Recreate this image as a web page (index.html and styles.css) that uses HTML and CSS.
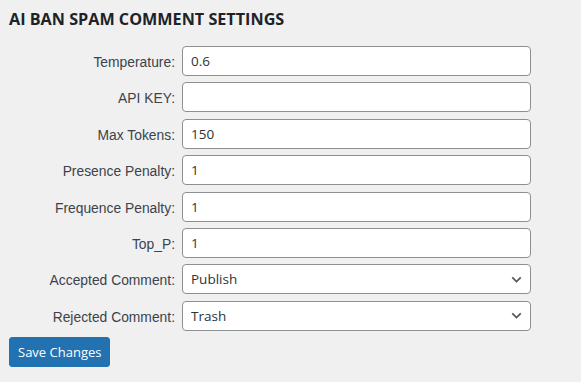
FILE: index.html
```html
<!DOCTYPE html>
<html>
<head>
    <title>AI Ban Spam Comment Settings</title>
    <link rel="stylesheet" href="styles.css">
</head>
<body>
    <div class="wrap">
        <h2>AI BAN SPAM COMMENT SETTINGS</h2>
        <form class="settings">
            <label for="temperature">Temperature:</label>
            <input type="text" id="temperature" value="0.6">
            <label for="api_key">API KEY:</label>
            <input type="text" id="api_key" value="">
            <label for="max_tokens">Max Tokens:</label>
            <input type="text" id="max_tokens" value="150">
            <label for="presence_penalty">Presence Penalty:</label>
            <input type="text" id="presence_penalty" value="1">
            <label for="frequence_penalty">Frequence Penalty:</label>
            <input type="text" id="frequence_penalty" value="1">
            <label for="top_p">Top_P:</label>
            <input type="text" id="top_p" value="1">
            <label for="accepted">Accepted Comment:</label>
            <select id="accepted">
                <option>Publish</option>
                <option>Pending</option>
            </select>
            <label for="rejected">Rejected Comment:</label>
            <select id="rejected">
                <option>Trash</option>
                <option>Spam</option>
            </select>
        </form>
        <button type="submit" class="button-primary">Save Changes</button>
    </div>
</body>
</html>
```

FILE: styles.css
```css
body { margin: 0; background: #f0f0f1; font-family: "Liberation Sans", Arial, sans-serif; color: #3c434a; }
.wrap { padding: 0 9px; }
h2 { font-family: "Open Sans", "Noto Sans", sans-serif; font-size: 16.2px; font-weight: 700; color: #1d2327; margin: 8px 0 0; height: 38px; line-height: 22px; letter-spacing: 0; }
.settings { display: grid; grid-template-columns: 166px 349px; column-gap: 7px; row-gap: 6.4px; }
.settings label { text-align: right; font-size: 13.85px; height: 30px; line-height: 32px; color: #3c434a; }
.settings input, .settings select { box-sizing: border-box; height: 30px; margin: 0; padding: 0 8px; border: 1px solid #8c8f94; border-radius: 4px; background: #fff; font-family: "Open Sans", "Noto Sans", sans-serif; font-size: 13.5px; color: #2c3338; outline: none; }
.settings select { appearance: none; -webkit-appearance: none; padding-right: 24px; background: #fff url("data:image/svg+xml;utf8,<svg xmlns='http://www.w3.org/2000/svg' width='20' height='20' viewBox='0 0 20 20'><path d='M5 7.5l5 5 5-5' fill='none' stroke='%2350575e' stroke-width='2'/></svg>") no-repeat right 5px center; background-size: 17px 17px; }
.button-primary { margin-top: 6px; height: 30px; padding: 0 8px; background: #2271b1; border: 1px solid #2271b1; border-radius: 3px; color: #fff; font-family: "Open Sans", "Noto Sans", sans-serif; font-size: 13px; line-height: 28px; cursor: pointer; }
```
